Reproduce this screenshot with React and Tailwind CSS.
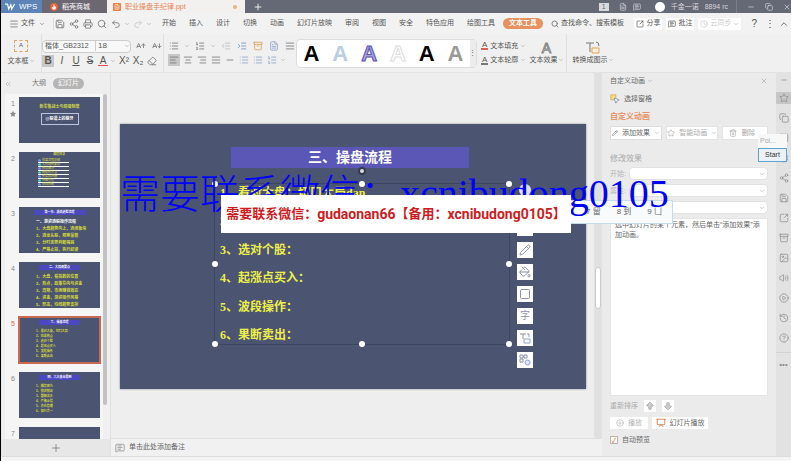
import React, { useState } from "react";
import {
  AArrowDown,
  AArrowUp,
  AlignCenter,
  AlignJustify,
  AlignLeft,
  AlignRight,
  Archive,
  ArrowBigDown,
  ArrowBigUp,
  ChevronDown,
  ChevronUp,
  ChevronsLeft,
  CircleHelp,
  CirclePlay,
  Clock,
  Copy,
  Eraser,
  FileText,
  Flame,
  History,
  Image,
  IndentDecrease,
  IndentIncrease,
  List,
  ListOrdered,
  Menu,
  MessageSquareText,
  Minus,
  PaintBucket,
  Pencil,
  Plus,
  Presentation,
  Printer,
  Redo2,
  Save,
  Search,
  Settings,
  Share2,
  Square,
  SquareArrowOutUpRight,
  Star,
  Trash2,
  Undo2,
  Volume2,
  X,
} from "lucide-react";

const menus = ["开始", "插入", "设计", "切换", "动画", "幻灯片放映", "审阅", "视图", "安全", "特色应用", "绘图工具"];

const steps = ["看对大盘：切口大局dan", "找准热点：", "选对个股：", "起涨点买入：", "波段操作：", "果断卖出："];

const railIcons = [Star, Copy, Square, Settings, Share2, Save, SquareArrowOutUpRight, Archive, Image, Volume2, CirclePlay, History, CircleHelp];

const artStyles = [
  "text-black",
  "text-[#b9cde3]",
  "text-[#a9a3dc] [-webkit-text-stroke:1px_#5b50ae]",
  "text-white [-webkit-text-stroke:1px_#dcdcdc]",
  "text-black",
  "text-[#999999]",
];

const thumbs = [
  { id: 1 },
  { id: 2 },
  {
    id: 3,
    title: "第一节、游资选股流程",
    lines: ["一、游资选股操作流程", "1、大盘趋势向上，选择板块", "2、选龙头股，观察量能", "3、分时走势判断强弱", "4、严格止损，执行纪律"],
  },
  {
    id: 4,
    title: "二、大局观要点",
    lines: ["1、大盘，看指数的位置", "2、热点，政策导向与资金", "3、周期，市场赚钱效应", "4、资金，游资操作风格", "5、形态，均线趋势支撑"],
  },
  { id: 5, title: "三、操盘流程", lines: ["1、看对大盘，切口大局", "2、找准热点", "3、选对个股", "4、起涨点买入", "5、波段操作", "6、果断卖出"] },
  { id: 6, title: "四、六大基本原则", lines: ["1、顺势而为", "2、快进快出", "3、跟随龙头", "4、严格止损", "5、仓位管理", "6、知行合一"] },
  { id: 7 },
];

function Caret() {
  return <ChevronDown className="size-1.5 shrink-0 text-[#999999]" />;
}

function IconButton({ icon: Icon, label, active, className = "text-[#777777]" }) {
  return (
    <button aria-label={label} className={`flex size-3 shrink-0 items-center justify-center ${active ? "bg-[#c8c8c8]" : ""} ${className}`}>
      <Icon className="size-2.5" strokeWidth={2} />
    </button>
  );
}

function TitleBar() {
  return (
    <header className="flex h-[13px] shrink-0 items-center bg-[#656875] text-[8px] leading-[13px] text-[#d6d7dc]">
      <button className="flex h-full w-[41px] items-center gap-1 bg-[#5d84b7] pl-1 text-white">
        <svg viewBox="0 0 12 9" className="h-2 w-2.5" fill="none" stroke="currentColor" strokeWidth="1.5">
          <path d="M0 1h3l1.5 6L7 2l1 5L11.500 1" />
        </svg>
        WPS
      </button>
      <button className="flex h-full w-[65px] items-center gap-1 bg-[#6b6872] pl-2 text-[7px] text-white">
        <span className="flex size-2 items-center justify-center rounded-full bg-[#e8623a]">
          <Flame className="size-1.5" fill="white" />
        </span>
        稻壳商城
      </button>
      <button className="flex h-full w-[138px] items-center gap-1 bg-[#f3f1f0] pl-1.5 text-[7px] text-[#e8824f]">
        <span className="flex size-2 items-center justify-center rounded-[1px] bg-[#ee7d46]">
          <FileText className="size-1.5 text-white" />
        </span>
        职业操盘手纪律.ppt
        <span className="mr-2 ml-auto size-1 rounded-full bg-[#eeb27c]" />
      </button>
      <button aria-label="新建" className="ml-2">
        <Plus className="size-2.5 text-white" />
      </button>
      <div className="ml-auto flex items-center gap-1.5 text-[7px]">
        <span className="flex h-2 w-2.5 items-center justify-center bg-[#d9dade] text-[#656875]">1</span>
        <FileText className="ml-1 size-2" />
        <MessageSquareText className="size-2" />
        <span className="ml-2 size-2.5 rounded-full bg-white" />
        <span>千金一诺</span>
        <span className="border-r border-[#7c7f8a] pr-2">8894 rc</span>
        <Minus className="ml-1 size-2" />
        <Copy className="ml-1 size-2" />
        <X className="ml-1 size-2" />
      </div>
    </header>
  );
}

function MenuBar() {
  return (
    <nav className="flex h-[21px] shrink-0 items-center bg-[#f2f2f2] pl-2 text-[7px] whitespace-nowrap text-[#555555]">
      <button className="flex items-center gap-0.5">
        <Menu className="size-2.5" strokeWidth={1.5} /> 文件 <ChevronDown className="ml-0.5 size-1.5" />
      </button>
      <div className="ml-2 flex items-center gap-0.5 border-l border-[#dddddd]">
        <IconButton icon={Save} label="保存" />
        <IconButton icon={Share2} label="输出" />
        <IconButton icon={Printer} label="打印" />
        <IconButton icon={Search} label="预览" />
        <IconButton icon={Undo2} label="撤销" />
        <Caret />
        <IconButton icon={Redo2} label="恢复" className="text-[#c8c8c8]" />
        <Caret />
      </div>
      <div className="ml-2.5 flex items-center gap-[13px]">
        {menus.map((m) => (
          <button key={m}>{m}</button>
        ))}
      </div>
      <button className="ml-2 h-[11px] rounded-full bg-[#e9905f] px-1.5 font-bold text-white">文本工具</button>
      <label className="ml-2 flex min-w-0 flex-1 items-center gap-0.5">
        <Search className="size-2 shrink-0" />
        <input aria-label="查找命令" placeholder="查找命令、搜索模板" className="w-full min-w-0 bg-transparent outline-none placeholder:text-[#555555]" />
      </label>
      <div className="ml-1 flex items-center gap-1 pr-0.5">
        <button className="flex h-[12px] items-center gap-0.5 bg-white px-0.5">
          <SquareArrowOutUpRight className="size-2" /> 分享
        </button>
        <button className="flex h-[12px] items-center gap-0.5 bg-white px-0.5">
          <MessageSquareText className="size-2" /> 批注
        </button>
        <button className="flex h-[12px] w-[43px] items-center justify-between bg-white px-0.5 text-[#cccccc]">
          <Clock className="size-2" /> 云同步 <Caret />
        </button>
        <button aria-label="帮助" className="ml-1.5 text-[10px]">?</button>
        <button aria-label="更多" className="ml-1 text-[10px]">⋮</button>
        <button aria-label="收起功能区">
          <ChevronUp className="size-2.5" />
        </button>
      </div>
    </nav>
  );
}

function Ribbon() {
  return (
    <div className="flex h-[39px] shrink-0 border-b border-[#e2e2e2] bg-[#f0f0f0] text-[7px] whitespace-nowrap text-[#555555]">
      <button className="flex w-[41px] flex-col items-center justify-center gap-1 border-r border-[#e0e0e0]">
        <span className="flex h-3 w-3.5 items-center justify-center border border-dashed border-[#d8a860] text-[6px]">A</span>
        <span className="flex items-center">文本框<Caret /></span>
      </button>
      <div className="flex w-[122px] flex-col justify-center gap-0.5 border-r border-[#e0e0e0]">
        <div className="flex items-center gap-1">
          <div className="flex h-[13px] w-[92px] items-center rounded-sm border border-[#cccccc] bg-[#f8f8f8]">
            <select aria-label="字体" className="w-[53px] appearance-none border-r border-[#cccccc] pl-0.5 outline-none">
              <option>楷体_GB2312</option>
            </select>
            <select aria-label="字号" className="flex-1 appearance-none pl-0.5 text-[8px] outline-none">
              <option>18</option>
            </select>
            <Caret />
          </div>
          <IconButton icon={AArrowUp} label="增大字号" />
          <IconButton icon={AArrowDown} label="减小字号" />
        </div>
        <div className="flex items-center gap-0.5 text-[10px] leading-[12px]">
          <button className="w-3 bg-[#c8c8c8] font-bold">B</button>
          <button className="w-3 italic">I</button>
          <button className="w-3 underline">U</button>
          <button className="w-3 line-through">S</button>
          <button className="w-2.5 border-b border-[#e0504a] leading-[9px]">A</button>
          <Caret />
          <button className="w-3">X²</button>
          <button className="w-3">X₂</button>
          <IconButton icon={Eraser} label="清除格式" />
        </div>
      </div>
      <div className="flex w-[132px] flex-col justify-center gap-0.5 pl-1">
        <div className="flex items-center gap-1">
          <IconButton icon={List} label="项目符号" />
          <Caret />
          <IconButton icon={ListOrdered} label="编号" />
          <Caret />
          <IconButton icon={IndentDecrease} label="减少缩进" className="text-[#bbbbbb]" />
          <IconButton icon={IndentIncrease} label="增加缩进" className="text-[#6e93c4]" />
          <IconButton icon={Archive} label="文字方向" className="text-[#d9a45a]" />
          <IconButton icon={FileText} label="对齐文本" className="text-[#8ba3c8]" />
          <IconButton icon={AlignJustify} label="文字排列" />
        </div>
        <div className="flex items-center gap-0.5">
          <IconButton icon={AlignLeft} label="左对齐" active />
          <IconButton icon={AlignCenter} label="居中" />
          <IconButton icon={AlignRight} label="右对齐" />
          <IconButton icon={AlignJustify} label="两端对齐" />
          <IconButton icon={Minus} label="分散对齐" />
          <IconButton icon={List} label="段前间距" className="text-[#8ba3c8]" />
          <IconButton icon={List} label="段后间距" className="text-[#8ba3c8]" />
          <IconButton icon={ListOrdered} label="行距" className="text-[#8ba3c8]" />
          <Caret />
        </div>
      </div>
      <div className="flex w-[181px] items-center self-center rounded-sm border border-[#dddddd] bg-white">
        {artStyles.map((s, i) => (
          <button key={i} aria-label={`艺术字样式 ${i + 1}`} className={`h-[27px] flex-1 text-[22px] leading-[27px] font-bold ${s}`}>
            A
          </button>
        ))}
        <span className="flex h-[27px] w-1.5 items-center justify-center bg-[#ececec]">⋮</span>
      </div>
      <div className="ml-1 flex w-[46px] flex-col justify-center gap-1">
        <button className="flex items-center gap-0.5">
          <span className="border-b-2 border-[#d8605a] px-px text-[8px] leading-[7px]">A</span>文本填充<Caret />
        </button>
        <button className="flex items-center gap-0.5">
          <span className="border-b-2 border-[#777777] px-px text-[8px] leading-[7px]">A</span>文本轮廓<Caret />
        </button>
      </div>
      <button className="flex w-[40px] flex-col items-center justify-center border-r border-[#e0e0e0]">
        <span className="text-[14px] leading-[14px] text-white [-webkit-text-stroke:1px_#888888]">A</span>
        <span className="flex items-center">文本效果<Caret /></span>
      </button>
      <button className="ml-1 flex w-[44px] flex-col items-center justify-center">
        <svg viewBox="0 0 16 14" className="h-3.5 w-4" fill="none" stroke="#777777">
          <path d="M1 2h8M5 2v9M11 1q3 0 3 4" />
          <path d="M7 7h7v5H7z" stroke="#e2a14f" fill="#fdf1df" />
        </svg>
        <span className="flex items-center">转换成图示<Caret /></span>
      </button>
    </div>
  );
}

function ThumbContent({ thumb }) {
  if (thumb.id === 1) {
    return (
      <div className="flex flex-col items-center gap-1 pt-2 text-[4px] leading-[4px]">
        <span className="font-bold text-[#d3d84a]">新零售战士与超级制度</span>
        <span className="w-[38px] border border-[#b9c6de] py-[3px] text-center font-bold text-white">@股道上的狼牙</span>
      </div>
    );
  }
  if (thumb.id === 2) {
    return (
      <div className="pt-px text-[3px] leading-[3px] text-[#d3d84a]">
        <p className="mb-[3px] pl-[34px] font-bold">课程目录</p>
        {["操盘流程总纲", "大局观的要点", "热点板块", "选股的方法", "买卖点把握", "资金管理", "风险控制"].map((t, i) => (
          <div key={t} className="ml-[19px] flex w-[31px] items-center gap-px border-b border-white">
            <span className={`size-[3px] rounded-full ${i % 2 ? "bg-[#56c6b0]" : "bg-[#6f93dc]"}`} />
            {t}
          </div>
        ))}
      </div>
    );
  }
  if (!thumb.title) return null;
  const dense = thumb.id < 5;
  return (
    <div className="pt-[3px] text-[3px] leading-[5px] font-bold whitespace-nowrap">
      <p className={`mx-auto bg-[#4c49c0] text-center text-white ${thumb.id === 3 ? "w-[52px]" : "w-[41px]"}`}>{thumb.title}</p>
      <div className={`mt-1 flex flex-col pl-[17px] text-[#d6da3c] ${dense ? "gap-[2px] text-[4px]" : ""}`}>
        {thumb.lines.map((l, i) => (
          <span key={l} className={thumb.id === 3 && i === 0 ? "text-white" : ""}>{l}</span>
        ))}
      </div>
    </div>
  );
}

function SlidePanel() {
  const [selected, setSelected] = useState(5);
  return (
    <aside className="flex w-[110px] shrink-0 flex-col border-r border-[#e0e0e0] bg-[#eeeeee]">
      <div className="flex h-[21px] shrink-0 items-center pl-[3px] text-[7px] text-[#777777]">
        <ChevronsLeft className="size-2 text-[#aaaaaa]" />
        <button className="ml-5">大纲</button>
        <button className="ml-[7px] h-[11px] rounded-full bg-[#b5b5b5] px-[5px] text-white">幻灯片</button>
      </div>
      <div className="flex min-h-0 flex-1">
        <ol className="ml-1 flex flex-1 flex-col gap-[9px] overflow-hidden bg-[#f5f5f5] pt-[3px]">
          {thumbs.map((t) => (
            <li key={t.id} className="flex shrink-0 gap-1 pl-1.5 text-[7px] text-[#888888]">
              <div className={`flex w-1 flex-col items-center leading-[14px] ${selected === t.id ? "text-[#e0693b]" : ""}`}>
                {t.id}
                {t.id === 1 && <Star className="size-1.5" fill="currentColor" />}
              </div>
              <button
                aria-label={`幻灯片 ${t.id}`}
                onClick={() => setSelected(t.id)}
                className={`h-[46px] w-[81px] overflow-hidden bg-[#4b5470] text-left ${selected === t.id ? "outline-2 -outline-offset-1 outline-[#c96a50]" : ""}`}
              >
                <div className="h-full">
                  <ThumbContent thumb={t} />
                </div>
              </button>
            </li>
          ))}
        </ol>
        <div className="flex w-[7px] flex-col bg-[#f0f0f0]">
          <div className="h-[90%] w-1 rounded-full bg-[#c2c2c2]" />
        </div>
      </div>
      <button aria-label="新建幻灯片" className="flex h-[17px] shrink-0 items-center justify-center bg-[#e7e7e7]">
        <Plus className="size-3 text-[#777777]" strokeWidth={1.5} />
      </button>
    </aside>
  );
}

const handles = [
  "-top-[3px] -left-[3px]",
  "-top-[3px] left-1/2 -translate-x-1/2",
  "-top-[3px] -right-[3px]",
  "top-1/2 -left-[3px] -translate-y-1/2",
  "top-1/2 -right-[3px] -translate-y-1/2",
  "-bottom-[3px] -left-[3px]",
  "-bottom-[3px] left-1/2 -translate-x-1/2",
  "-right-[3px] -bottom-[3px]",
];

function Slide() {
  return (
    <div className="relative aspect-[466/265] w-full bg-[#4b5470] shadow-[0_0_2px_#888888]">
      <div className="pt-[23px]">
        <h1 className="mx-auto w-[51%] -translate-x-[3px] bg-[#5b57b6] text-center text-[14px] leading-[21px] font-bold text-white">三、操盘流程</h1>
      </div>
      {/* selected text box */}
      <div className="absolute top-[59px] left-[94px] h-[162px] w-[296px] border border-[#3d4660]">
        <ol className="flex h-full flex-col justify-between pl-[5px] text-[12px] leading-[18px] font-bold text-[#eef04a]">
          {steps.map((s, i) => (
            <li key={s}>
              <span className="font-['Liberation_Serif','Noto_Sans_CJK_SC',serif]">{i + 1}、{s}</span>
            </li>
          ))}
        </ol>
        {handles.map((h) => (
          <span key={h} className={`absolute size-1.5 rounded-full bg-white ${h}`} />
        ))}
        <span className="absolute -top-[17px] left-1/2 size-2 -translate-x-1/2 rounded-full border-2 border-[#333a50] bg-[#dddddd]" />
        <div className="absolute top-[36px] left-[302px] flex flex-col gap-1.5">
          {[Minus, Pencil, PaintBucket, Square].map((Icon, i) => (
            <button key={i} aria-label={["布局", "画笔", "填充", "轮廓"][i]} className="flex size-4 items-center justify-center bg-white text-[#8b93a8]">
              <Icon className="size-3" strokeWidth={2} />
            </button>
          ))}
          <button className="size-4 bg-white text-[10px] leading-[16px] text-[#8b93a8]">字</button>
          <button aria-label="转换图示" className="flex size-4 items-center justify-center bg-white text-[#8b93a8]">
            <svg viewBox="0 0 12 12" className="size-3" fill="none" stroke="currentColor">
              <path d="M1 2h6M4 2v5M8 2h2v3" />
              <path d="M5 7h6v4H5z" stroke="#8ea3cf" />
            </svg>
          </button>
          <button aria-label="智能动画" className="flex size-4 items-center justify-center bg-white text-[#8b93a8]">
            <svg viewBox="0 0 12 12" className="size-3" fill="none" stroke="currentColor">
              <path d="M1 1h3v3H1zM5 1h3v3H5zM1 5h3v3H1z" />
              <circle cx="8.500" cy="8.500" r="2.500" stroke="#8ea3e0" fill="#dfe7fa" />
            </svg>
          </button>
        </div>
        <span className="absolute top-0 left-[304px] size-3 rounded-full bg-[#dfe1e7]" />
      </div>
    </div>
  );
}

function Stage() {
  return (
    <main className="flex min-w-0 flex-1 flex-col bg-[#eeeeee]">
      <div className="flex min-h-0 flex-1">
        <div className="min-w-0 flex-1 overflow-hidden pt-[51px] pr-2 pl-[9px]">
          <Slide />
        </div>
        <div className="flex w-2 flex-col items-center border-x border-[#e2e2e2] bg-[#e0e0e0] pt-[194px]">
          <div className="h-[42px] w-1.5 rounded-sm border border-[#cccccc] bg-white" />
        </div>
      </div>
      <label className="flex h-[18px] shrink-0 items-center gap-1 border-t border-[#e0e0e0] bg-[#f1f1f1] pl-1">
        <MessageSquareText className="size-2.5 text-[#777777]" strokeWidth={1.5} />
        <input aria-label="备注" placeholder="单击此处添加备注" className="flex-1 bg-transparent text-[7px] outline-none placeholder:text-[#666666]" />
      </label>
    </main>
  );
}

function AnimationPane() {
  return (
    <aside className="flex w-[174px] shrink-0 flex-col bg-[#ebebeb] pr-2 pl-2 text-[7px] leading-[10px] text-[#666666]">
      <div className="mt-[3px] flex items-center justify-between">
        <h2 className="flex items-center gap-0.5">自定义动画 <Caret /></h2>
        <button aria-label="关闭">
          <X className="size-2 text-[#aaaaaa]" />
        </button>
      </div>
      <button className="mt-2 flex items-center gap-1">
        <svg viewBox="0 0 12 12" className="size-2.5" fill="none" stroke="#7f8fb4">
          <path d="M1 1h6v6H1z" fill="#f5dc8c" stroke="#d3b155" />
          <path d="M5 5l6 2-2.500 1.500L7 11z" fill="#ffffff" />
        </svg>
        选择窗格
      </button>
      <h3 className="mt-2 text-[8px] font-bold text-[#e79566]">自定义动画</h3>
      <div className="mt-1 flex gap-1">
        <button className="flex h-[14px] flex-[4] items-center justify-center gap-1 border border-[#dddddd] bg-white">
          <Pencil className="size-1.5" />添加效果 <Caret />
        </button>
        <button className="flex h-[14px] flex-[4] items-center justify-center gap-1 border border-[#e4e4e4] bg-white text-[#aaaaaa]">
          <Star className="size-2" />智能动画 <Caret />
        </button>
        <button className="flex h-[14px] flex-[3] items-center justify-start gap-1 border border-[#e4e4e4] bg-white pl-1.5 text-[#aaaaaa]">
          <Trash2 className="size-2" />删除
        </button>
      </div>
      <h3 className="mt-3.5 text-[8px] text-[#aaaaaa]">修改效果</h3>
      <div className="mt-[3px] flex flex-col gap-1">
        {["开始:", "属性:", "速度:"].map((f) => (
          <label key={f} className="flex items-center text-[#b5b5b5]">
            <span className="w-[19px]">{f}</span>
            <span className="flex h-[13px] flex-1 items-center rounded-sm border border-[#e2e2e2] bg-white pr-0.5">
              <select disabled className="h-full min-w-0 flex-1 appearance-none" />
              <Caret />
            </span>
          </label>
        ))}
      </div>
      <div className="mt-1 min-h-0 flex-1 border border-[#e4e4e4] bg-white px-1 pt-px">
        选中幻灯片的某个元素，然后单击“添加效果”添加动画。
      </div>
      <div className="mt-1 flex items-center gap-1.5 text-[#aaaaaa]">
        重新排序
        <button aria-label="上移" className="flex size-3 items-center justify-center bg-white">
          <ArrowBigUp className="size-2.5" fill="#cccccc" />
        </button>
        <button aria-label="下移" className="flex size-3 items-center justify-center bg-white">
          <ArrowBigDown className="size-2.5" fill="#cccccc" />
        </button>
      </div>
      <div className="mt-[5px] flex gap-1">
        <button className="flex h-[12px] w-[38px] items-center justify-center gap-1 bg-white text-[#b5b5b5]">
          <CirclePlay className="size-2" />播放
        </button>
        <button className="flex h-[12px] w-[56px] items-center justify-center gap-1 bg-white">
          <Presentation className="size-2.5 text-[#d9763e]" />幻灯片播放
        </button>
      </div>
      <label className="mt-[6px] mb-[11px] flex items-center gap-1">
        <input
          type="checkbox"
          defaultChecked
          className="flex size-2 appearance-none items-center justify-center border border-[#c9b0a0] bg-white text-[7px] leading-[7px] text-[#e0693b] checked:before:content-['✓']"
        />
        自动预览
      </label>
    </aside>
  );
}

function Rail() {
  return (
    <aside className="flex w-[15px] shrink-0 flex-col items-center gap-2 bg-[#e2e2e2] pt-[3px] text-[#8a8a8a]">
      <Minus className="size-2" />
      {railIcons.map((Icon, i) => (
        <button key={i} aria-label={`任务窗格 ${i + 1}`} className={`flex h-3 w-full items-center justify-center ${i === 0 ? "bg-[#c6c6c6]" : ""}`}>
          <Icon className="size-2.5" strokeWidth={1.75} />
        </button>
      ))}
      <span className="w-full border-t border-[#d2d2d2] pt-2 text-center text-[8px] leading-[8px]">•••</span>
    </aside>
  );
}

export default function App() {
  return (
    <div className="relative flex h-screen flex-col overflow-hidden border-l border-black bg-[#eeeeee] font-['Liberation_Sans','Noto_Sans_CJK_SC',sans-serif]">
      <TitleBar />
      <MenuBar />
      <Ribbon />
      <div className="flex min-h-0 flex-1">
        <SlidePanel />
        <Stage />
        <AnimationPane />
        <Rail />
      </div>
      <footer className="h-[5px] shrink-0 border-t border-[#dddddd] bg-[#f3f3f3]" />

      {/* input method candidates */}
      <div className="absolute top-[200px] left-[560px] flex h-6 w-[112px] items-center justify-end gap-4 border border-[#c5dbe8] bg-[#f8fbfc] pr-2.5 text-[8px] whitespace-nowrap text-[#666666]">
        <span>7 留</span>
        <span>8 到</span>
        <span>9 凵</span>
      </div>
      <div className="absolute top-[134px] right-1 w-[29px] text-[7px]">
        <p className="h-[14px] bg-[#f8f8f8] pl-0.5 leading-[14px] text-[#aaaaaa]">Poi...</p>
        <button className="h-[14px] w-full border border-[#5fa3d0] bg-[#eaf2f7] leading-[12px] text-[#333333]">Start</button>
      </div>

      {/* contact overlays */}
      <p className="pointer-events-none absolute top-[170px] left-[119px] flex text-[40px] leading-[48px] font-light whitespace-nowrap text-[#0000ff]">
        <span>需要联系微信：</span>
        <span className="font-['Liberation_Serif',serif]">xcnibudong0105</span>
      </p>
      <p className="absolute top-[195px] left-[220px] flex h-[38px] w-[350px] items-center justify-center bg-white font-['Roboto','Noto_Sans_CJK_SC',sans-serif] text-[14px] font-bold whitespace-nowrap text-[#cc1c22]">
        <span className="text-[13px]">需要联系微信：</span>
        gudaonan66
        <span className="text-[13px]">【备用：</span>
        xcnibudong0105
        <span className="text-[13px]">】</span>
      </p>
    </div>
  );
}
